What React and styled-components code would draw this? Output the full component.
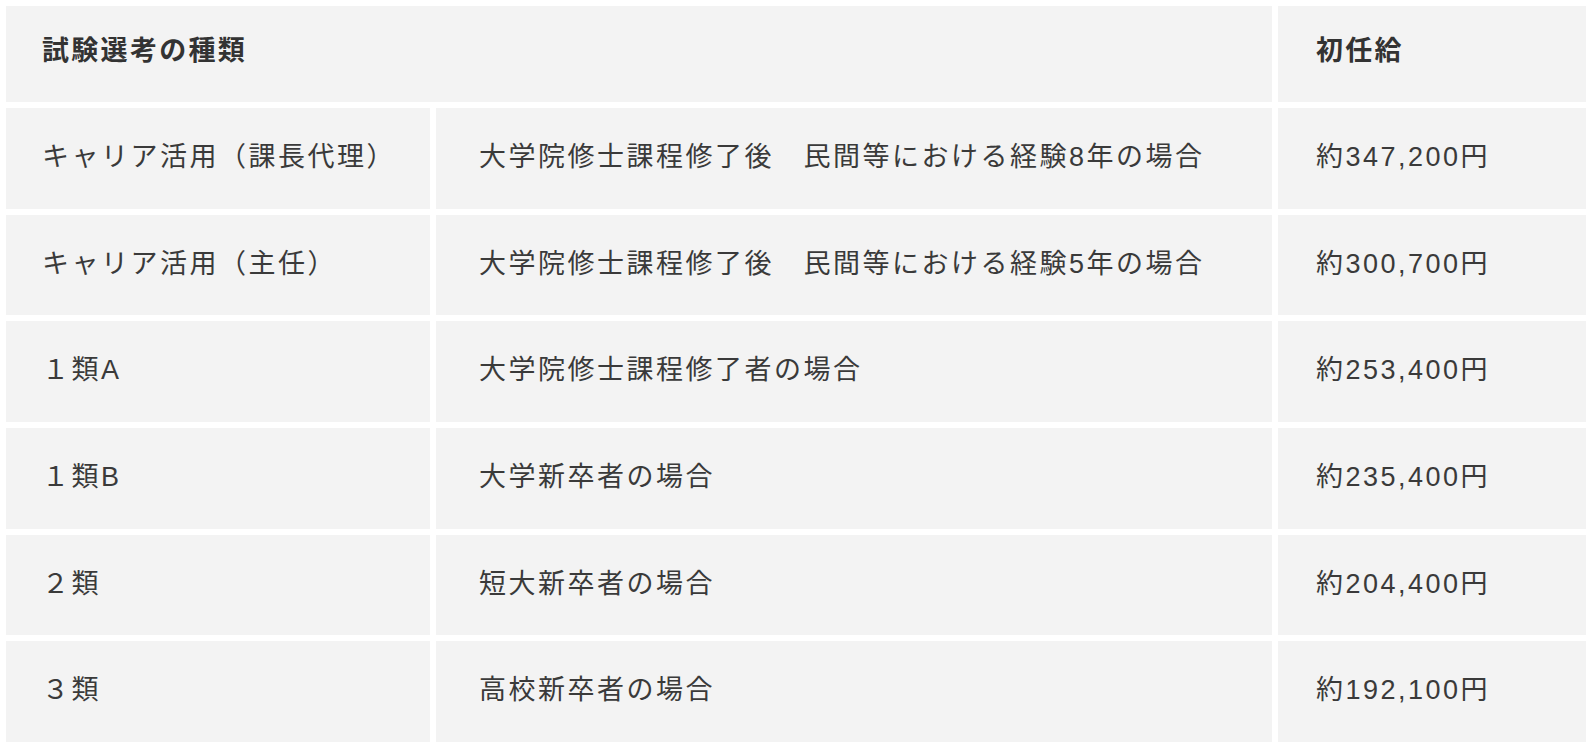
import React from 'react';
import styled, { createGlobalStyle } from 'styled-components';

const GlobalStyle = createGlobalStyle`
  html, body {
    margin: 0;
    padding: 0;
    background: #ffffff;
  }
  body {
    font-family: "Liberation Sans", "Noto Sans CJK JP", sans-serif;
    color: #333333;
  }
`;

const SalaryTable = styled.table`
  width: 1592px;
  table-layout: fixed;
  border-collapse: separate;
  border-spacing: 6px;
`;

const HeadRow = styled.tr`
  height: 96px;
`;

const BodyRow = styled.tr`
  height: 100.67px;
`;

const HeadCell = styled.th`
  background: #f3f3f3;
  text-align: left;
  vertical-align: middle;
  padding: 0 0 4px ${props => props.$indent || 36}px;
  font-size: 27px;
  line-height: 1.4;
  font-weight: 700;
  letter-spacing: 2.3px;
  color: #333333;
`;

const Cell = styled.td`
  background: #f3f3f3;
  vertical-align: middle;
  padding: 0 0 1px ${props => props.$indent || 36}px;
  font-size: 27px;
  line-height: 1.4;
  font-weight: 400;
  letter-spacing: 2.5px;
  color: #3a3a3a;
  white-space: nowrap;
`;

const rows = [
  { type: 'キャリア活用（課長代理）', detail: '大学院修士課程修了後　民間等における経験8年の場合', pay: '約347,200円' },
  { type: 'キャリア活用（主任）', detail: '大学院修士課程修了後　民間等における経験5年の場合', pay: '約300,700円' },
  { type: '１類A', detail: '大学院修士課程修了者の場合', pay: '約253,400円' },
  { type: '１類B', detail: '大学新卒者の場合', pay: '約235,400円' },
  { type: '２類', detail: '短大新卒者の場合', pay: '約204,400円' },
  { type: '３類', detail: '高校新卒者の場合', pay: '約192,100円' },
];

export default function App() {
  return (
    <>
      <GlobalStyle />
      <SalaryTable>
        <colgroup>
          <col style={{ width: 424 }} />
          <col style={{ width: 836 }} />
          <col style={{ width: 308 }} />
        </colgroup>
        <thead>
          <HeadRow>
            <HeadCell colSpan={2}>試験選考の種類</HeadCell>
            <HeadCell $indent={38}>初任給</HeadCell>
          </HeadRow>
        </thead>
        <tbody>
          {rows.map(row => (
            <BodyRow key={row.type}>
              <Cell>{row.type}</Cell>
              <Cell $indent={43}>{row.detail}</Cell>
              <Cell $indent={38}>{row.pay}</Cell>
            </BodyRow>
          ))}
        </tbody>
      </SalaryTable>
    </>
  );
}
